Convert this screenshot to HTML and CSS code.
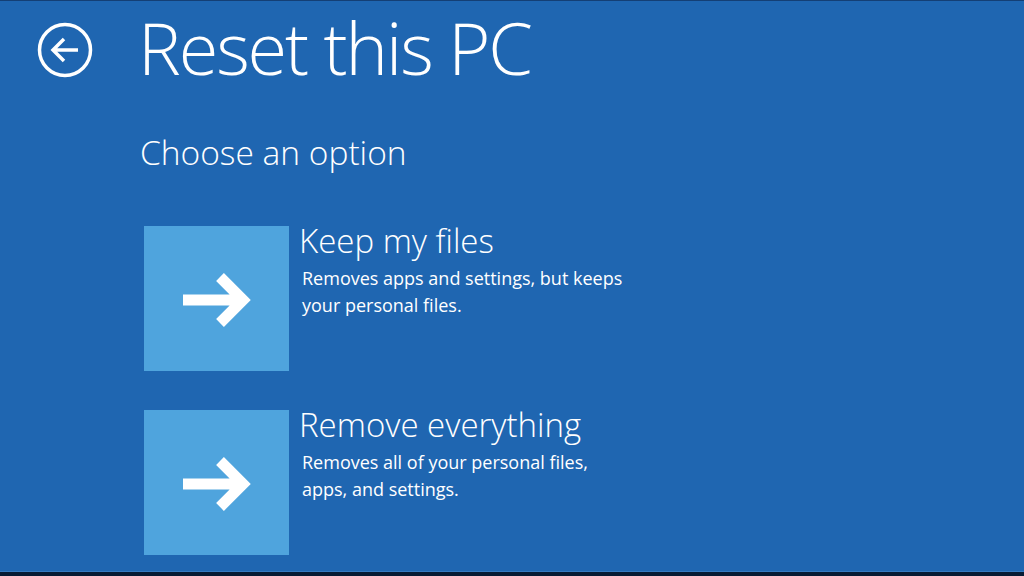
FILE: index.html
```html
<!DOCTYPE html>
<html lang="en">
<head>
<meta charset="utf-8">
<title>Reset this PC</title>
<link rel="stylesheet" href="styles.css">
</head>
<body>
<div class="screen">
  <header class="header">
    <button class="back" aria-label="Back">
      <svg width="56" height="56" viewBox="0 0 56 56" fill="none" stroke="#fff" stroke-width="3.5">
        <circle cx="28" cy="28" r="25.5"/>
        <path d="M16 28H41M27 17L16 28L27 39" stroke-linejoin="miter"/>
      </svg>
    </button>
    <h1 class="title">Reset this PC</h1>
  </header>
  <main class="content">
    <h2 class="subtitle">Choose an option</h2>
    <div class="options">
      <div class="option">
        <div class="tile">
          <svg width="72" height="58" viewBox="0 0 72 58" fill="none" stroke="#fff" stroke-width="11">
            <path d="M0 29H60M37 6L60 29L37 52" stroke-linejoin="miter" stroke-miterlimit="4"/>
          </svg>
        </div>
        <div class="option-text">
          <div class="option-title">Keep my files</div>
          <div class="option-desc">Removes apps and settings, but keeps<br>your personal files.</div>
        </div>
      </div>
      <div class="option">
        <div class="tile">
          <svg width="72" height="58" viewBox="0 0 72 58" fill="none" stroke="#fff" stroke-width="11">
            <path d="M0 29H60M37 6L60 29L37 52" stroke-linejoin="miter" stroke-miterlimit="4"/>
          </svg>
        </div>
        <div class="option-text">
          <div class="option-title">Remove everything</div>
          <div class="option-desc">Removes all of your personal files,<br>apps, and settings.</div>
        </div>
      </div>
    </div>
  </main>
</div>
</body>
</html>
```
FILE: styles.css
```css
* { box-sizing: border-box; }
html, body {
  margin: 0;
  padding: 0;
  width: 1024px;
  height: 576px;
  overflow: hidden;
  background: #1f66b1;
}
.screen {
  width: 1024px;
  height: 576px;
  background: #1f66b1;
  color: #fff;
  font-family: "Open Sans", "Noto Sans", sans-serif;
  border-top: 1px solid #143f75;
  box-shadow: inset 0 -4px 0 #071a33, inset 0 -5px 0 #3479c0;
}
.header {
  display: flex;
  align-items: flex-start;
  padding: 0 0 0 37px;
}
.back {
  width: 56px;
  height: 56px;
  margin-top: 21px;
  padding: 0;
  border: 0;
  background: none;
  display: block;
}
.back svg { display: block; }
.title {
  margin: 0 0 0 45px;
  padding-right: 12px;
  font-size: 72px;
  line-height: 92px;
  font-weight: 300;
  letter-spacing: -2.1px;
  white-space: nowrap;
}
.content {
  padding-left: 144px;
}
.subtitle {
  margin: 39px 0 0 -4px;
  font-size: 33.5px;
  line-height: 41px;
  font-weight: 300;
}
.options {
  margin-top: 53px;
  display: flex;
  flex-direction: column;
  gap: 39px;
}
.option {
  display: flex;
  align-items: flex-start;
  gap: 12px;
}
.tile {
  width: 145px;
  height: 145px;
  background: #4fa4dd;
  display: flex;
  align-items: center;
  justify-content: center;
  flex: none;
}
.tile svg { display: block; margin-left: 4px; margin-top: 2px; }
.option-text {
  margin-top: -4px;
  margin-left: -2px;
}
.option-title {
  font-size: 33px;
  line-height: 38px;
  font-weight: 300;
}
.option-desc {
  margin: 5px 0 0 3px;
  font-size: 18px;
  line-height: 27px;
  font-weight: 400;
}
```
